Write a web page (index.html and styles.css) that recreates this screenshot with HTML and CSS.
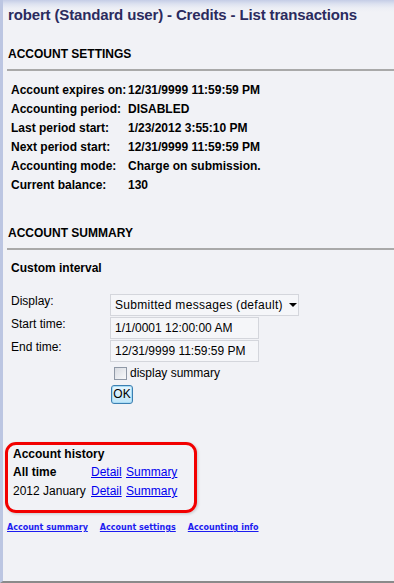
FILE: index.html
```html
<!DOCTYPE html>
<html>
<head>
<meta charset="utf-8">
<link rel="stylesheet" href="styles.css">
</head>
<body>
<div class="frame">
  <h1 class="title">robert (Standard user) - Credits - List transactions</h1>

  <h2 class="section">ACCOUNT SETTINGS</h2>
  <hr class="rule">
  <div class="settings">
    <div class="lbl">Account expires on:</div><div class="val">12/31/9999 11:59:59 PM</div>
    <div class="lbl">Accounting period:</div><div class="val">DISABLED</div>
    <div class="lbl">Last period start:</div><div class="val">1/23/2012 3:55:10 PM</div>
    <div class="lbl">Next period start:</div><div class="val">12/31/9999 11:59:59 PM</div>
    <div class="lbl">Accounting mode:</div><div class="val">Charge on submission.</div>
    <div class="lbl">Current balance:</div><div class="val">130</div>
  </div>

  <h2 class="section summary-head">ACCOUNT SUMMARY</h2>
  <hr class="rule">
  <div class="subhead">Custom interval</div>

  <div class="form">
    <div class="frow">
      <div class="flbl">Display:</div>
      <div class="select"><span class="select-text">Submitted messages (default)</span><span class="arrow"></span></div>
    </div>
    <div class="frow">
      <div class="flbl">Start time:</div>
      <div class="input">1/1/0001 12:00:00 AM</div>
    </div>
    <div class="frow">
      <div class="flbl">End time:</div>
      <div class="input">12/31/9999 11:59:59 PM</div>
    </div>
    <div class="frow check-row">
      <div class="flbl"></div>
      <div class="check"><span class="box"></span>display summary</div>
    </div>
    <div class="frow ok-row">
      <div class="flbl"></div>
      <span class="ok">OK</span>
    </div>
  </div>

  <div class="history">
    <div class="hist-title">Account history</div>
    <div class="hist-row first"><span class="hist-lbl bold">All time</span><a href="#" class="lnk">Detail</a> <a href="#" class="lnk">Summary</a></div>
    <div class="hist-row"><span class="hist-lbl">2012 January</span><a href="#" class="lnk">Detail</a> <a href="#" class="lnk">Summary</a></div>
  </div>

  <div class="footer-links">
    <a href="#">Account summary</a>
    <a href="#">Account settings</a>
    <a href="#">Accounting info</a>
  </div>
</div>
</body>
</html>
```

FILE: styles.css
```css
html, body {
  margin: 0;
  padding: 0;
}
body {
  background: #f1f2f6;
  font-family: "Liberation Sans", Arial, sans-serif;
  color: #000;
  width: 394px;
  height: 583px;
  overflow: hidden;
}
.frame {
  box-sizing: border-box;
  height: 583px;
  border-left: 3px solid #bcc6e2;
  border-bottom: 2px solid #8a8a8a;
  background: linear-gradient(to bottom, #c5cde6 0px, #dde2f0 4px, #eceef5 8px, #f1f2f6 12px);
  padding-top: 5px;
}
.title {
  margin: 0 0 0 5px;
  font-size: 15px;
  line-height: 19px;
  font-weight: bold;
  letter-spacing: -0.15px;
  color: #2b2b5e;
}
.section {
  margin: 23px 0 0 5px;
  font-size: 12px;
  line-height: 15px;
  font-weight: bold;
}
.rule {
  margin: 7px 0 0 4px;
  border: 0;
  border-top: 2px solid #a9a9a9;
  height: 0;
}
.settings {
  margin: 10px 0 0 8px;
  display: grid;
  grid-template-columns: 117px auto;
  grid-auto-rows: 19px;
  font-size: 12px;
  font-weight: bold;
  line-height: 19px;
}
.lbl {
  white-space: nowrap;
}
.summary-head {
  margin-top: 31px;
}
.subhead {
  margin: 11px 0 0 8px;
  font-size: 12px;
  font-weight: bold;
  line-height: 15px;
}
.form {
  margin: 18px 0 0 8px;
  display: flex;
  flex-direction: column;
  gap: 1px;
  font-size: 12px;
  line-height: 15px;
}
.frow {
  display: flex;
  align-items: flex-start;
  height: 22px;
}
.flbl {
  width: 99px;
  flex: none;
}
.select {
  box-sizing: border-box;
  width: 189px;
  height: 22px;
  border: 1px solid #d4d6dc;
  background: #f5f6f9;
  display: flex;
  align-items: center;
  padding-left: 4px;
  font-size: 12px;
  overflow: hidden;
}
.select-text {
  width: 172px;
  flex: none;
  white-space: nowrap;
  overflow: hidden;
  letter-spacing: 0.3px;
}
.arrow {
  margin-left: 2px;
  width: 0;
  height: 0;
  border-left: 4px solid transparent;
  border-right: 4px solid transparent;
  border-top: 4px solid #000;
}
.input {
  box-sizing: border-box;
  width: 149px;
  height: 22px;
  border: 1px solid #d4d6dc;
  background: #f5f6f9;
  padding-left: 4px;
  line-height: 20px;
  font-size: 12px;
}
.check-row {
  height: 21px;
  align-items: center;
}
.check {
  display: flex;
  align-items: center;
  margin-left: 4px;
}
.box {
  box-sizing: border-box;
  width: 13px;
  height: 13px;
  border: 1px solid #8f98a6;
  background: linear-gradient(135deg, #d8dbe1, #f8f9fb);
  margin-right: 3px;
}
.ok-row {
  height: 19px;
}
.ok {
  display: inline-block;
  box-sizing: border-box;
  margin-left: 1px;
  height: 19px;
  width: 22px;
  border: 1px solid #3c7fb1;
  border-radius: 3px;
  background: linear-gradient(to bottom, #e9f6fd, #bfe6f9);
  box-shadow: inset 0 0 0 1px #a8dcf5;
  font-size: 12px;
  line-height: 17px;
  text-align: center;
}
.history {
  box-sizing: border-box;
  margin: 38px 0 0 2px;
  width: 192px;
  height: 71px;
  border: 3px solid #f20000;
  border-radius: 11px;
  box-shadow: 1px 1px 3px rgba(0,0,0,0.18);
  padding: 1px 0 0 5px;
  font-size: 12px;
}
.hist-title {
  font-weight: bold;
  line-height: 16px;
}
.hist-row {
  line-height: 19px;
}
.hist-row.first {
  margin-top: 1px;
}
.hist-lbl {
  display: inline-block;
  width: 78px;
}
.bold {
  font-weight: bold;
}
.lnk {
  color: #0000ee;
  text-decoration: underline;
  margin-right: 1px;
}
.footer-links {
  margin: 9px 0 0 4px;
  font-family: "DejaVu Sans", Verdana, sans-serif;
  font-size: 8px;
  font-weight: bold;
  display: flex;
  gap: 12px;
  line-height: 12px;
}
.footer-links a {
  color: #1c1cf0;
}
```
